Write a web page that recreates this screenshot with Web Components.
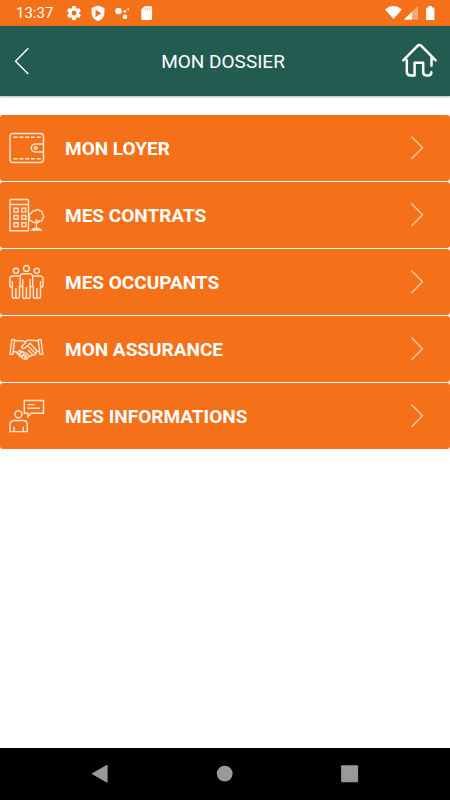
<!DOCTYPE html>
<html lang="fr">
<head>
<meta charset="utf-8">
<meta name="viewport" content="width=device-width, initial-scale=1">
<title>Mon dossier</title>
<style>
html, body { margin: 0; height: 100%; }
body { font-family: Roboto, "Liberation Sans", sans-serif; background: #fff; }
</style>
</head>
<body>
<dossier-app></dossier-app>
<script>
const define = (name, html, setup) => {
  const template = document.createElement('template');
  template.innerHTML = html;
  customElements.define(name, class extends HTMLElement {
    constructor() {
      super();
      this.attachShadow({ mode: 'open' }).append(template.content.cloneNode(true));
    }
    connectedCallback() { if (setup) setup(this); }
  });
};

define('status-bar', `
<style>
:host { display: flex; justify-content: space-between; height: 26px; background: #f47019; color: #fff; }
div { display: flex; align-items: center; }
.left { padding-left: 16px; }
.right { padding-right: 15px; }
time { font-size: 15px; line-height: 28px; width: 46px; white-space: nowrap; }
svg { display: block; height: 26px; fill: #fff; }
</style>
<div class="left">
  <time>13:37</time>
  <svg width="24" viewBox="0 0 24 26"><g transform="translate(3.6 4.6) scale(.7)"><path d="M19.4 13a7.500 7.500 0 0 0 0-2l2.100-1.600a.5.5 0 0 0 .1-.6l-2-3.500a.5.5 0 0 0-.6-.2l-2.500 1a7.300 7.300 0 0 0-1.700-1L14.400 2.400a.5.5 0 0 0-.5-.4h-4a.5.5 0 0 0-.5.4L9 5.100a7.700 7.700 0 0 0-1.700 1l-2.500-1a.5.5 0 0 0-.6.2l-2 3.500a.5.5 0 0 0 .1.6L4.500 11a8 8 0 0 0 0 2l-2.100 1.600a.5.5 0 0 0-.1.600l2 3.500c.1.200.4.300.6.200l2.500-1a7.300 7.300 0 0 0 1.700 1l.4 2.700c0 .2.200.4.500.4h4c.200 0 .500-.2.500-.4l.4-2.700a7.700 7.700 0 0 0 1.700-1l2.500 1c.2.1.5 0 .6-.2l2-3.500a.5.5 0 0 0-.1-.6zM12 15.500a3.500 3.500 0 1 1 0-7 3.500 3.500 0 0 1 0 7z"/></g></svg>
  <svg width="24" viewBox="0 0 24 26"><path fill-rule="evenodd" d="M12 5.600 18.400 8v5.200c0 3.600-2.500 6.400-6.400 8-3.900-1.600-6.400-4.400-6.400-8V8zM9.500 9.700v7.200l5.800-3.600z"/></svg>
  <svg width="24" viewBox="0 0 24 26"><circle cx="8.500" cy="11" r="3.200"/><circle cx="14.800" cy="11.300" r="1.400"/><circle cx="15" cy="16.800" r="2.300"/><circle cx="18.300" cy="9.200" r="1"/></svg>
  <svg width="24" viewBox="0 0 24 26"><path fill-rule="evenodd" d="M10.500 6.300h6.300q1.300 0 1.300 1.300v11q0 1.300-1.300 1.300H8.600q-1.300 0-1.300-1.300v-9z"/><path fill="#fac29a" d="M10.800 8v2.400H12V8zm2.200 0v2.400h1.200V8zm2.200 0v2.400h1.200V8z"/></svg>
</div>
<div class="right">
  <svg width="19" viewBox="0 0 19 26"><path d="M0 9.500Q8.500 2.700 17 9.500L8.500 19z"/></svg>
  <svg width="14" viewBox="0 0 14 26"><path opacity=".4" d="M14 6v13.500H0z"/><path d="M8 12v7.500H0z"/></svg>
  <svg width="17" viewBox="0 0 17 26"><path d="M10.500 6h3.500v1.500h1.600q.8 0 .8.800v10.900q0 .8-.8.800H8.900q-.8 0-.8-.8V8.300q0-.8.8-.8h1.600z"/></svg>
</div>`);

define('title-bar', `
<style>
:host { position: relative; z-index: 1; display: grid; grid-template-columns: 56px 1fr 56px; align-items: center; height: 70px; background: #225b50; color: #fff; box-shadow: 0 1px 2px rgba(0,0,0,.3); }
h1 { margin: 0; padding: 2px 4px 0 0; font-size: 19px; line-height: 24px; font-weight: 400; text-align: center; }
button { padding: 0; border: 0; background: none; height: 70px; cursor: pointer; }
svg { display: block; fill: none; stroke: #fff; }
</style>
<button type="button" aria-label="Retour"><svg width="56" height="70" viewBox="0 0 56 70"><path d="M28.300 22.300 15.500 35.200 28.300 48" stroke-width="1.400"/></svg></button>
<h1><slot></slot></h1>
<button type="button" aria-label="Accueil"><svg width="56" height="70" viewBox="0 0 56 70"><path d="M9.200 35.200 23.500 20.700q1.900-1.900 3.800 0L41.600 35.200M12.800 35v11q0 4.300 4.300 4.300h3.500V37.500h8.600v9.400q0 3.400 3 3.400h2q2.900 0 3.200-3.200M37.500 33v7.500" transform="translate(0 -.8)" stroke-width="2.500" stroke-linecap="round" stroke-linejoin="round"/></svg></button>`);

const icons = {
  wallet: `<rect x="1" y="3.500" width="33.500" height="29" rx="3"/><path d="M4.500 7.200H32M4.500 28.800H32" stroke-dasharray="4 1.800"/><path d="M34.500 14h-8.200a4 4 0 0 0 0 8h8.200"/><circle cx="26.700" cy="18" r="1.400"/>`,
  building: `<path d="M1 33.700V3.500q0-1 1-1h16.500q1 0 1 1v30.200zM1 7.500h18.500"/><path d="M5 11.300h4v3.800H5zm7.800 0h4v3.800h-4zM5 18.500h4v3.800H5zm7.800 0h4v3.800h-4zM5 25.800h4v3.800H5zm7.800 0h4v3.800h-4z"/><path d="M26.600 25.200c-1.800.8-3.500.2-3.800-1.300-2.300.2-3.600-2.200-2.100-3.800-1.300-2 .1-4 2-4 .2-2.300 2.500-2.900 3.500-2 .9-2.300 3.700-2.100 4.100-.1 2-.5 3.600 1 3 3 2 1.200 1.700 3.500.3 4.100.5 2.200-1.500 3.500-3 2.800-.5 1.200-1.400 1.600-2.600 1.200M27.400 33v-11M27.400 26.500l2.500-3M23 33q1.500-2 4.400-1.200Q30.500 31 32 33z"/>`,
  people: `<circle cx="17.400" cy="4.400" r="2.900"/><circle cx="7" cy="6.800" r="2.600"/><circle cx="27.800" cy="6.800" r="2.600"/><path d="M13.700 22.700q-2.600.3-2.600-2.300V13q0-3.200 3.200-3.200h6.200q3.200 0 3.200 3.200v7.400q0 2.600-2.600 2.300M13.700 15v18q0 1.500 1.700 1.500 2 0 2-2V23v9.500q0 2 2 2 1.700 0 1.700-1.500V15"/><path d="M10.500 12H4Q.8 12 .8 15v6.500q0 2 2.500 1.700V17v15.700q0 1.500 1.700 1.500t1.900-1.800V24v8.400q0 1.800 1.800 1.800t1.800-1.500V22M24.300 12h6.500q3.200 0 3.200 3v6.500q0 2-2.500 1.700V17v15.700q0 1.500-1.700 1.500t-1.900-1.800V24v8.400q0 1.800-1.800 1.800t-1.800-1.500V22"/>`,
  handshake: `<path d="M2.800 8.600h2.800L3.900 23.400H1zM32 8.600h-2.800l1.700 14.800h2.900zM5.500 9.800h8.200l2 .8 3.200-1.300h3.700l6.700.6M4.300 20.700h2.600l4.500 4.500M30.600 20.500h-2.500"/><path d="m17.300 10.700-5 5.500q1.200 2.200 3.600.7l2.700-2.300 8.100 8q-1 2.300-3 1.200l-4.500-4.500M23 23.500q-.5 2.400-2.800 1.500l-3.500-3.500M20 25q-.4 2-2.500 1.500l-2-2M19.300 14l1.800-1.800 7 8-1.400 2.400"/><path d="m10.500 23.600 2.600-2.900q2.300-.2 2.100 1.800l-2.700 3q-2.500.3-2-1.900zM13 25.800l2.100-2.100q2-.1 1.900 1.700L15 27.600q-2.300.1-2-1.800zM15.500 27.400l1.400-1.300q1.700 0 1.500 1.500l-1.500 1q-1.500 0-1.400-1.200zM8.500 21.700l2.200-2.200q1.900 0 1.700 1.500l-2.300 2.400q-1.900-.1-1.600-1.700z"/>`,
  speaker: `<circle cx="9.400" cy="16.200" r="3.500"/><path d="M1 33.600V27q0-4.500 4.500-4.500h8.300q4.500 0 4.500 4.500v6.600zM5 33.500v-4.700M14.300 33.500v-4.700"/><path d="M15.300 2.500h19.200v12.800H22.300l-3.500 3.600v-3.600h-3.500zM18.500 6.600h7M18.500 10.300h12.300"/>`
};

define('menu-item', `
<style>
:host { display: block; }
button { display: grid; grid-template-columns: 36px 1fr 14px; column-gap: 20px; align-items: center; width: 100%; height: 66px; padding: 0 26px 0 9px; border: 0; border-radius: 3px; background: #f47019; color: #fff; font: 700 19px/24px Roboto, "Liberation Sans", sans-serif; text-align: left; cursor: pointer; }
span { padding-top: 2px; }
svg { display: block; fill: none; }
.icon { stroke: #ffe6d4; stroke-width: 1.400; }
.arrow { stroke: #fcc9a5; stroke-width: 1.400; }
</style>
<button type="button">
  <svg class="icon" width="36" height="36" viewBox="0 0 36 36" aria-hidden="true"></svg>
  <span><slot></slot></span>
  <svg class="arrow" width="14" height="26" viewBox="0 0 14 26" aria-hidden="true"><path d="M1.400 1.500 12.500 12.700 1.400 24"/></svg>
</button>`, el => { el.shadowRoot.querySelector('.icon').innerHTML = icons[el.getAttribute('icon')]; });

define('system-nav', `
<style>
:host { display: grid; grid-template-columns: repeat(3, 1fr); height: 52px; padding: 0 8.333%; background: #000; }
button { display: grid; place-items: center; padding: 0; border: 0; background: none; cursor: pointer; }
svg { fill: #999; }
</style>
<button type="button" aria-label="Retour système"><svg width="18" height="20" viewBox="0 0 18 20"><path d="M.4 9.700 15.600 1q1-.4 1 .5v16.400q0 .9-1 .5z"/></svg></button>
<button type="button" aria-label="Écran d'accueil"><svg width="18" height="20" viewBox="0 0 18 20"><circle cx="8.700" cy="9.600" r="7.900"/></svg></button>
<button type="button" aria-label="Applications récentes"><svg width="18" height="20" viewBox="0 0 18 20"><rect x=".1" y="1.200" width="17" height="17" rx="1"/></svg></button>`);

define('dossier-app', `
<style>
:host { display: flex; flex-direction: column; min-height: 100vh; background: #fff; }
main { flex: 1; display: flex; flex-direction: column; gap: 1px; padding-top: 19px; }
</style>
<status-bar></status-bar>
<title-bar>MON DOSSIER</title-bar>
<main>
  <menu-item icon="wallet">MON LOYER</menu-item>
  <menu-item icon="building">MES CONTRATS</menu-item>
  <menu-item icon="people">MES OCCUPANTS</menu-item>
  <menu-item icon="handshake">MON ASSURANCE</menu-item>
  <menu-item icon="speaker">MES INFORMATIONS</menu-item>
</main>
<system-nav></system-nav>`);
</script>
</body>
</html>
